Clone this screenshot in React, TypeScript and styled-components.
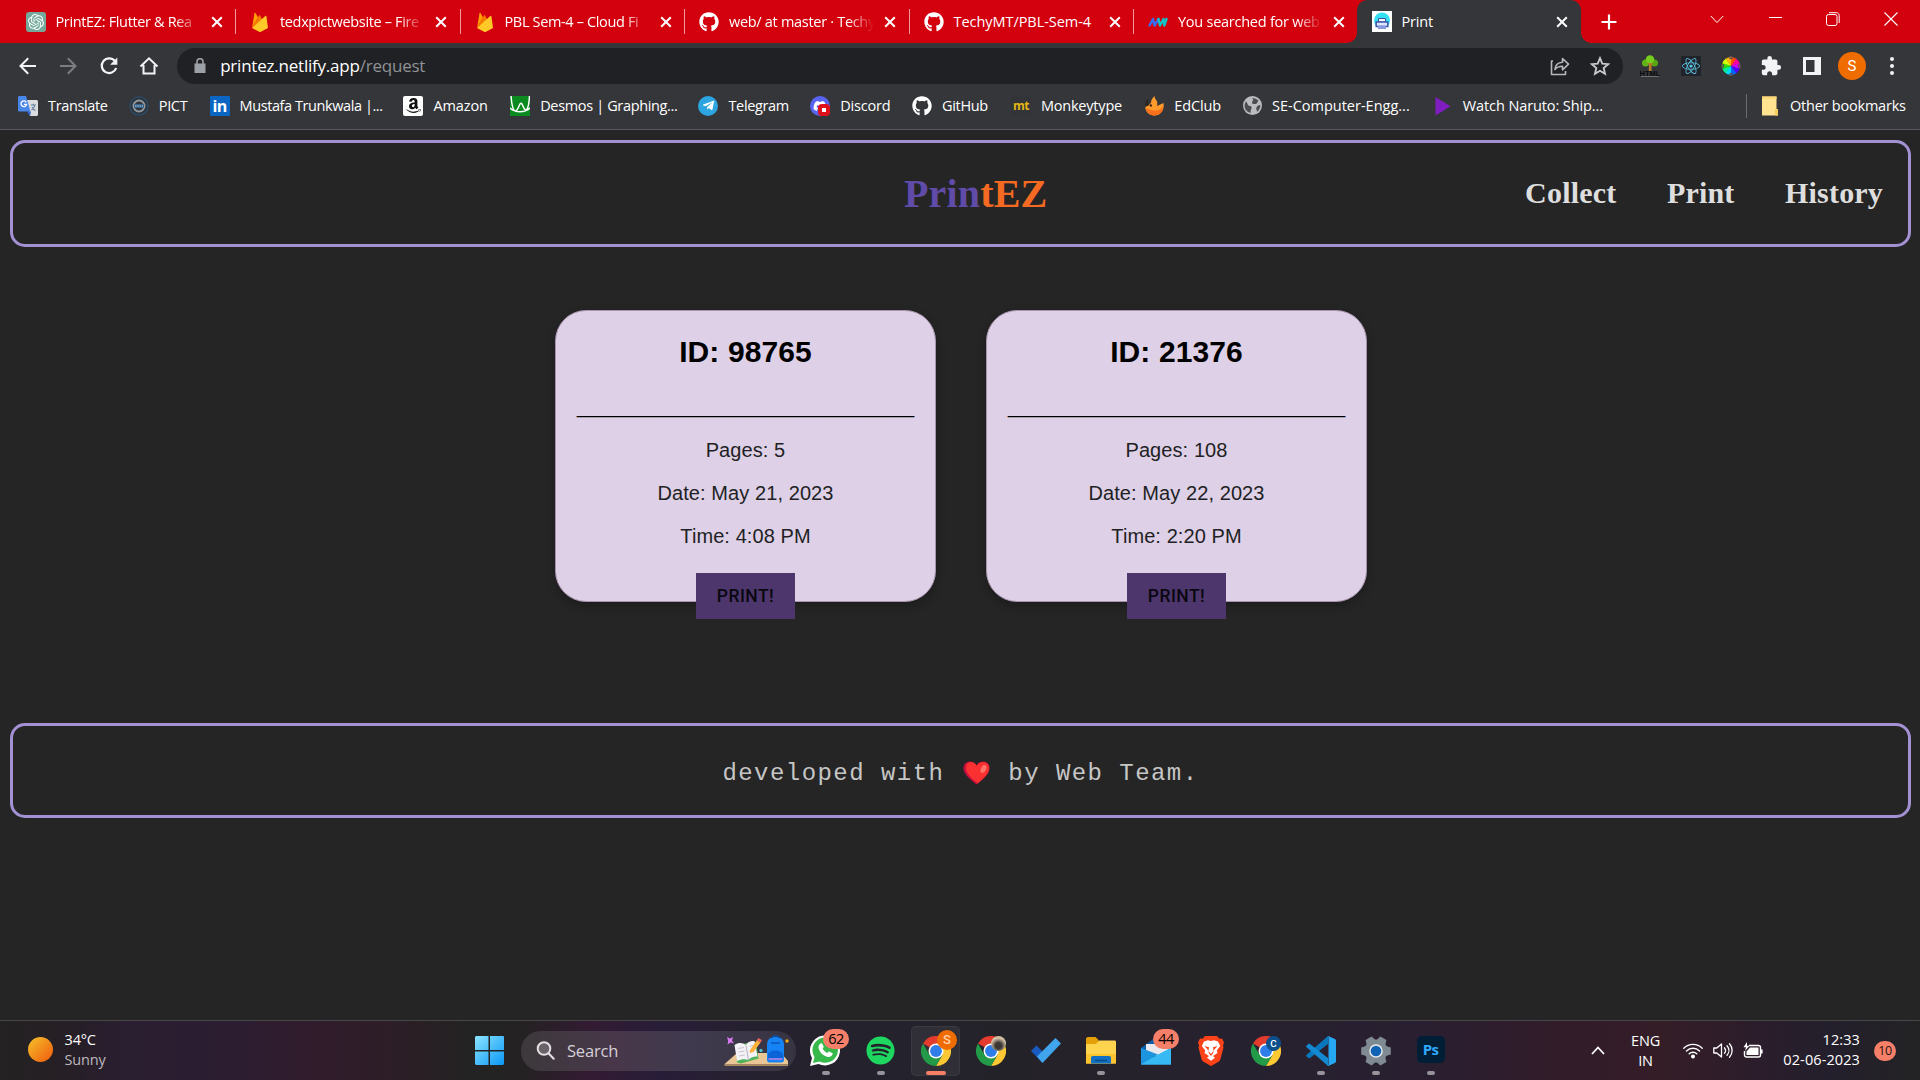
import React from "react";
import styled, { createGlobalStyle, css } from "styled-components";
import { FaGithub, FaSpotify, FaDiscord, FaTelegramPlane, FaAmazon, FaReact } from "react-icons/fa";
import { SiOpenai } from "react-icons/si";
import { MdExtension } from "react-icons/md";

const ui = `"Open Sans", "Noto Sans", sans-serif`;

const GlobalStyle = createGlobalStyle`
  *, *::before, *::after { box-sizing: border-box; }
  html, body { margin: 0; padding: 0; background: #252525; overflow: hidden; }
  svg { display: block; flex: none; }
  h2, p { margin: 0; }
  button { border: 0; margin: 0; padding: 0; background: none; color: inherit; font: inherit; }
`;

const Screen = styled.div`
  width: 1920px;
  height: 1080px;
  display: flex;
  flex-direction: column;
  overflow: hidden;
  background: #252525;
  font-family: ${ui};
`;

/* ---------- tab strip ---------- */

const TabStrip = styled.div`
  flex: none;
  height: 43px;
  padding-left: 11.5px;
  display: flex;
  background: #d3000d;
  color: #fff;
`;

const Tab = styled.div<{ $active?: boolean; $divider?: boolean }>`
  position: relative;
  flex: none;
  width: 224.5px;
  height: 43px;
  padding: 0 13.5px 0 ${(p) => (p.$active ? 15 : 14)}px;
  display: flex;
  align-items: center;
  ${(p) =>
    p.$divider &&
    css`
      &::after {
        content: "";
        position: absolute;
        right: 0;
        top: 9px;
        width: 1px;
        height: 25px;
        background: #f09aa0;
      }
    `}
  ${(p) =>
    p.$active &&
    css`
      margin-left: -2px;
      background: #35363a;
      border-radius: 10px 10px 0 0;
      &::before,
      &::after {
        content: "";
        position: absolute;
        bottom: 0;
        width: 10px;
        height: 10px;
      }
      &::before {
        left: -10px;
        background: radial-gradient(circle at 0 0, transparent 9.5px, #35363a 10px);
      }
      &::after {
        right: -10px;
        background: radial-gradient(circle at 100% 0, transparent 9.5px, #35363a 10px);
      }
    `}
`;

const TabTitle = styled.span<{ $fade?: boolean; $spacing?: number }>`
  flex: 1;
  min-width: 0;
  margin-left: 10px;
  margin-right: 10px;
  white-space: nowrap;
  font-size: 14.5px;
  line-height: 22px;
  letter-spacing: ${(p) => p.$spacing ?? -0.35}px;
  ${(p) => p.$fade && `mask-image: linear-gradient(90deg, #000 calc(100% - 26px), transparent 100%);`}
`;

const WindowControls = styled.div`
  margin-left: auto;
  height: 37px;
  display: flex;
  align-items: center;
`;

const ControlSlot = styled.button`
  width: 58px;
  display: flex;
  justify-content: center;
`;

const NewTab = styled.button`
  margin-left: 20px;
  display: flex;
  align-items: center;
`;

/* ---------- toolbar ---------- */

const Toolbar = styled.div`
  flex: none;
  height: 46px;
  padding-left: 18px;
  display: flex;
  align-items: center;
  background: #35363a;
`;

const NavButtons = styled.div`
  display: flex;
  gap: 20.4px;
`;

const Omnibox = styled.div`
  width: 1446px;
  height: 36px;
  margin-left: 18px;
  padding: 0 12px 0 16px;
  border-radius: 18px;
  background: #202124;
  display: flex;
  align-items: center;
`;

const Url = styled.span`
  margin-left: 13px;
  flex: 1;
  font-size: 17px;
  line-height: 24px;
  letter-spacing: -0.22px;
  color: #fff;
`;

const UrlPath = styled.span`
  color: #8f9296;
`;

const OmniActions = styled.div`
  display: flex;
  gap: 18px;
`;

const Extensions = styled.div`
  margin-left: 7px;
  display: flex;
`;

const ExtensionSlot = styled.div`
  width: 40.35px;
  height: 30px;
  display: flex;
  align-items: center;
  justify-content: center;
`;

const Avatar = styled.div`
  width: 28px;
  height: 28px;
  border-radius: 50%;
  background: #ef6c00;
  color: #fff;
  font: 400 15px/28px Roboto, sans-serif;
  text-align: center;
`;

/* ---------- bookmarks ---------- */

const BookmarkBar = styled.div`
  flex: none;
  height: 41px;
  padding: 0 12px 7px 18px;
  display: flex;
  align-items: center;
  background: #35363a;
  border-bottom: 1px solid #58595c;
  color: #fff;
`;

const Bookmark = styled.div`
  display: flex;
  align-items: center;
  gap: 10px;
  margin-right: 20.8px;
`;

const BookmarkLabel = styled.span<{ $width: number; $spacing?: number }>`
  width: ${(p) => p.$width}px;
  white-space: nowrap;
  font-size: 14.5px;
  line-height: 22px;
  letter-spacing: ${(p) => p.$spacing ?? -0.35}px;
`;

const OtherBookmarks = styled.div`
  margin-left: auto;
  height: 24px;
  padding-left: 14px;
  border-left: 1px solid #6b6c70;
  display: flex;
  align-items: center;
  gap: 11px;
`;

const IconTile = styled.span<{ $bg: string; $radius?: number; $color?: string }>`
  flex: none;
  width: 20px;
  height: 20px;
  border-radius: ${(p) => p.$radius ?? 0}px;
  background: ${(p) => p.$bg};
  color: ${(p) => p.$color ?? "#fff"};
  display: flex;
  align-items: center;
  justify-content: center;
  font: 700 12px/20px ${ui};
  letter-spacing: -0.5px;
`;

const LinkedInTile = styled(IconTile)`
  font-size: 16px;
  line-height: 18px;
`;

const DiscordTile = styled(IconTile)`
  position: relative;
`;

const DiscordAlert = styled.span`
  position: absolute;
  right: 0;
  bottom: 0;
  width: 12px;
  height: 12px;
  border: 4px solid #e0101a;
  border-radius: 4px;
  background: #fff;
`;

/* ---------- web page ---------- */

const Page = styled.main`
  flex: 1;
  min-height: 0;
  padding: 10px 9px 0 10px;
  display: flex;
  flex-direction: column;
  background: #252525;
`;

const Header = styled.header`
  flex: none;
  height: 107px;
  padding: 0 25px 0 891px;
  border: 3px solid #a391d4;
  border-radius: 15px;
  display: flex;
  align-items: center;
  font-family: "Liberation Serif", "Times New Roman", serif;
  font-weight: 700;
`;

const Logo = styled.div`
  font-size: 40px;
  line-height: 46px;
  letter-spacing: 0.15px;
  color: #604ba8;
`;

const LogoAccent = styled.span`
  color: #f46a22;
`;

const Nav = styled.nav`
  margin-left: auto;
  padding-bottom: 2px;
  display: flex;
  gap: 50.6px;
  font-size: 30px;
  line-height: 36px;
  letter-spacing: 0.18px;
  color: #dedede;
`;

const Cards = styled.section`
  flex: none;
  margin-top: 63px;
  height: 413px;
  padding-left: 545px;
  display: flex;
  align-items: flex-start;
  gap: 50px;
`;

const Card = styled.article`
  width: 381px;
  height: 292px;
  padding-top: 23px;
  border: 1px solid #a793ae;
  border-radius: 31px;
  background: #ded0e6;
  box-shadow: 0 4px 10px rgba(0, 0, 0, 0.25);
  display: flex;
  flex-direction: column;
  align-items: center;
  font-family: "Liberation Sans", Arial, sans-serif;
  color: #211f24;
`;

const CardTitle = styled.h2`
  font-size: 30px;
  line-height: 36px;
  font-weight: 700;
  letter-spacing: 0.1px;
  color: #000;
`;

const Rule = styled.p`
  margin-top: 24px;
  font: 22.5px/26px "Liberation Serif", serif;
  color: #000;
`;

const CardLines = styled.div`
  margin-top: 9px;
  text-align: center;
`;

const CardLine = styled.p`
  height: 43px;
  font-size: 20px;
  line-height: 43px;
  letter-spacing: 0.08px;
`;

const PrintButton = styled.button`
  flex: none;
  margin-top: 15px;
  width: 99px;
  height: 46px;
  background: #4c366b;
  color: #0a0710;
  font: 500 17.5px/46px Roboto, sans-serif;
  letter-spacing: 0.45px;
`;

const Footer = styled.footer`
  flex: none;
  height: 95px;
  padding-top: 4px;
  border: 3px solid #a391d4;
  border-radius: 15px;
  display: flex;
  align-items: center;
  justify-content: center;
  gap: 18.5px;
  font: 24px/30px "Liberation Mono", "Courier New", monospace;
  letter-spacing: 1.45px;
  color: #c6c6c6;
`;

const FooterText = styled.span`
  padding-top: 2px;
`;

/* ---------- taskbar ---------- */

const Taskbar = styled.footer`
  flex: none;
  height: 60px;
  border-top: 1px solid #474747;
  display: flex;
  align-items: center;
  color: #fff;
  background: linear-gradient(
    90deg,
    #242222 0, #261f26 70px, #2a1e31 130px, #2c1d31 230px, #311c2c 320px,
    #2c1e26 400px, #232323 470px, #242222 520px, #331b33 590px, #281d38 660px,
    #25212e 760px, #24222d 880px, #242229 1000px, #26222b 1120px, #26212f 1250px,
    #291f30 1420px, #321c2a 1560px, #341d27 1660px, #2b1d2b 1760px, #241f2c 1830px, #232325 1920px
  );
`;

const Weather = styled.div`
  width: 475px;
  padding-left: 27.5px;
  padding-bottom: 2px;
  display: flex;
  align-items: center;
  gap: 12px;
`;

const Sun = styled.span`
  width: 25px;
  height: 25px;
  border-radius: 50%;
  background: linear-gradient(135deg, #f5c22c, #f0590c);
`;

const Stacked = styled.div<{ $align?: string }>`
  font-size: 14.5px;
  line-height: 20px;
  letter-spacing: -0.15px;
  text-align: ${(p) => p.$align ?? "left"};
`;

const Muted = styled.div`
  color: #bdb8be;
`;

const SearchBox = styled.div`
  width: 275px;
  height: 40px;
  margin-left: 16px;
  padding: 0 6px 0 15px;
  border-radius: 20px;
  background: linear-gradient(90deg, #3d393c, #48374a 35%, #403a4e 60%, #373442);
  display: flex;
  align-items: center;
  color: #d6d0d8;
  font-size: 16.5px;
  letter-spacing: -0.2px;
`;

const SearchLabel = styled.span`
  flex: 1;
  margin-left: 12px;
`;

const Apps = styled.div`
  margin-left: 2px;
  display: flex;
`;

const AppSlot = styled.div<{ $active?: boolean }>`
  position: relative;
  width: 49px;
  height: 50px;
  margin: 0 3px;
  border-radius: 5px;
  display: flex;
  align-items: center;
  justify-content: center;
  ${(p) => p.$active && `background: #302f37; box-shadow: inset 0 0 0 1px #3a3940;`}
`;

const Indicator = styled.span<{ $active?: boolean }>`
  position: absolute;
  bottom: 1px;
  left: 50%;
  width: ${(p) => (p.$active ? 20 : 8)}px;
  height: 4px;
  transform: translateX(-50%);
  border-radius: 2px;
  background: ${(p) => (p.$active ? "#f87f66" : "#96939b")};
`;

const CountBadge = styled.span`
  position: absolute;
  top: 3px;
  left: 22px;
  width: 26px;
  height: 20px;
  border-radius: 10px;
  background: #f57f68;
  color: #000;
  font-size: 14.5px;
  line-height: 20px;
  letter-spacing: -0.5px;
  text-align: center;
`;

const ProfileBadge = styled.span<{ $size: number; $bg: string; $top: number; $left: number; $color?: string }>`
  position: absolute;
  top: ${(p) => p.$top}px;
  left: ${(p) => p.$left}px;
  width: ${(p) => p.$size}px;
  height: ${(p) => p.$size}px;
  border-radius: 50%;
  background: ${(p) => p.$bg};
  color: ${(p) => p.$color ?? "#fff"};
  font: 500 ${(p) => p.$size * 0.65}px/${(p) => p.$size}px Roboto, sans-serif;
  text-align: center;
`;

const PhotoshopTile = styled.span`
  width: 28px;
  height: 27px;
  margin-bottom: 2px;
  border-radius: 5px;
  background: #001e36;
  color: #31a8ff;
  font: 700 15px/26px ${ui};
  letter-spacing: -0.8px;
  text-align: center;
`;

const Tray = styled.div`
  margin-left: auto;
  padding-right: 24px;
  display: flex;
  align-items: center;
`;

const TrayLanguage = styled(Stacked)`
  margin-left: 26px;
  width: 29px;
`;

const TrayIcons = styled.div`
  margin: 0 18px 0 23px;
  width: 80px;
  display: flex;
  gap: 10px;
`;

const Clock = styled(Stacked)`
  width: 79px;
  padding-bottom: 2px;
  letter-spacing: 0.1px;
`;

const NoticeBadge = styled.span`
  margin-left: 14px;
  width: 22px;
  height: 20px;
  border-radius: 10px;
  background: #f57f68;
  color: #26140f;
  font-size: 12.5px;
  line-height: 20px;
  letter-spacing: -0.5px;
  text-align: center;
`;

/* ---------- drawings ---------- */

const CloseGlyph = () => (
  <svg width="12" height="12" viewBox="0 0 12 12" stroke="#fff" strokeWidth="2">
    <path d="M1.2 1.2l9.6 9.6M10.8 1.2l-9.6 9.6" />
  </svg>
);

const Firebase = () => (
  <svg width="20" height="20" viewBox="0 0 20 20">
    <path d="M2 16L4.5 1.2c.1-.5.7-.6 1-.2L8 5.6z" fill="#ffa000" />
    <path d="M2 16L9 3.6c.2-.4.8-.4 1 0L12.500 8z" fill="#f57c00" />
    <path d="M2 16L15.300 3.900c.4-.4 1-.2 1.100.3L18 16l-7 3.800c-.6.3-1.300.3-1.900 0z" fill="#ffca28" />
  </svg>
);

const Waves = () => (
  <svg width="20" height="20" viewBox="0 0 20 20" fill="none" strokeWidth="2.4" strokeLinejoin="round" strokeLinecap="round">
    <path d="M1.500 13.500L5 7l1.500 6.500L10.500 7" stroke="#3b6cf0" />
    <path d="M10.500 7l1.500 6.500L15.500 7l.8 6.500L18.500 7" stroke="#12c2c4" />
  </svg>
);

const Printer = () => (
  <svg width="20" height="21" viewBox="0 0 20 21">
    <path d="M0 0h20v21H0z" fill="#fff" />
    <circle cx="10" cy="9.500" r="8" fill="#35dff2" />
    <path d="M6.500 7.500h7v3.500h-7z" fill="#fff" stroke="#3c4fa0" />
    <path d="M4.200 11h11.600v4.500H4.200z" fill="#dfe6ff" stroke="#3f54a8" strokeWidth="1.500" />
    <path d="M6 14.500h8V18H6z" fill="#8c9ae0" />
  </svg>
);

const Translate = () => (
  <svg width="20" height="20" viewBox="0 0 20 20">
    <path d="M8 4h10.500c.8 0 1.500.6 1.500 1.500v13c0 .8-.6 1.500-1.500 1.500H12z" fill="#dadce0" />
    <path d="M1.500 0H8l4.500 15.500h-11C.6 15.500 0 15 0 14V1.500C0 .6.600 0 1.500 0z" fill="#4a86e8" />
    <path d="M9 15.500h4L12 20z" fill="#3367d6" />
    <path d="M8.300 6.300A2.800 2.800 0 1 0 8.600 8.400H6" fill="none" stroke="#fff" strokeWidth="1.300" />
    <path d="M12.800 9h5M15.300 7.800V9M17 9c-.5 2.500-2 4-3.500 5M14 11c.8 1.800 2 3 3.500 3.500" fill="none" stroke="#5f7b9a" strokeWidth="1.100" />
  </svg>
);

const CollegeSeal = () => (
  <svg width="20" height="20" viewBox="0 0 20 20">
    <circle cx="10" cy="10" r="9" fill="#2b333b" stroke="#2b4a66" strokeWidth="1.500" />
    <circle cx="10" cy="10" r="5.500" fill="#30353a" stroke="#94999e" strokeWidth="2" />
    <path d="M5 8h10v4H5z" fill="#35618a" />
    <path d="M6 10h8" stroke="#c5ccd2" strokeDasharray="1.500 .8" />
  </svg>
);

const Desmos = () => (
  <svg width="20" height="20" viewBox="0 0 20 20">
    <path d="M0 0h20v20H0z" fill="#0a8a1f" />
    <path d="M1 0c1.500 18 5 18 8.500 9 1-2.500 2-2.500 3 0 3 8 6 7 7-9M0 12c5 5 15 5 20 0" fill="none" stroke="#fff" strokeWidth="1.500" />
  </svg>
);

const EdClub = () => (
  <svg width="20" height="20" viewBox="0 0 20 20">
    <path d="M7 7c0-3 1-5 4-7-.5 2 0 3 1.500 4.500C13.500 6 13.500 7.500 13 10l6.500-3c1 7-2.500 12.500-9 12.500C4.500 19.500 1 15 1.500 11z" fill="#ff9a2b" />
    <path d="M10 19.500c5.500 0 9.500-4 9.500-9.500-2 3-5 4.500-9 4.500-3 0-6-1-9-2.500 1 4 4 7.500 8.500 7.500z" fill="#f9701c" />
    <path d="M5.500 3C2 3.500 .5 6.500 1.500 10c2 .5 3.500-.5 4-2C4 8 3 6.500 5.500 3z" fill="#2c2520" />
    <circle cx="6.800" cy="9.500" r="1.200" fill="#3c2412" />
  </svg>
);

const Globe = () => (
  <svg width="19" height="19" viewBox="0 0 20 20">
    <circle cx="10" cy="10" r="10" fill="#babcbf" />
    <path d="M3 5.500c3 3 1 4.500 4.500 5 2 .3 2 2 1 3.500-.6 1-.2 2.500-.8 4C3.500 16.500 1.500 13.500 1.600 9.500zM9.500 2c2.500 0 5 1 6.800 3-1.500 1.500-1 3.500-4 3.500-1.500 0-3-.5-2.800-2 .2-1.200 1.500-1.500 1.300-2.500zM18.300 9.500c0 3-1.300 5.500-3.500 7-.3-2-1.300-2.500-.6-4.500.5-1.500 2-2 4.100-2.500z" fill="#4b4c50" />
  </svg>
);

const FolderMark = () => (
  <svg width="18" height="20" viewBox="0 0 18 20">
    <path d="M1 .5h14.500V13L17 14v5.500H1z" fill="#ffe391" />
    <path d="M1 .5h14.500V3H1z" fill="#ffd977" />
    <path d="M14 13h3v6.500h-3z" fill="#f4cd5c" />
  </svg>
);

const HtmlTree = () => (
  <svg width="20" height="22" viewBox="0 0 20 22">
    <path d="M9 8h2.500v8H8.800z" fill="#c8862b" />
    <circle cx="5.500" cy="8" r="3.500" fill="#5fb616" />
    <circle cx="14.500" cy="8" r="3.500" fill="#54a912" />
    <circle cx="10" cy="4.500" r="4.200" fill="#73cf1c" />
    <path d="M10.200 16V8M10.200 11l3-3M10 10L7.500 8" stroke="#b5762a" strokeWidth="1.200" />
    <path d="M1 21.500h18" stroke="#6e6e70" />
    <text x="10" y="20.500" textAnchor="middle" fontFamily="Liberation Sans, sans-serif" fontWeight="700" fontSize="7.500" fill="#0c0c0c">
      HTML
    </text>
  </svg>
);

const wheelColors = ["#ff4d00", "#ff009c", "#d400ff", "#5200ff", "#0068ff", "#00d8ff", "#00f09a", "#2fdf00", "#d8ff00", "#ffb400"];

const ColorWheel = () => (
  <svg width="20" height="20" viewBox="-10 -10 20 20">
    {wheelColors.map((color, i) => {
      const a = ((i * 36 - 90) * Math.PI) / 180;
      const b = (((i + 1) * 36 - 88) * Math.PI) / 180;
      return (
        <path key={color} d={`M0 0L${9 * Math.cos(a)} ${9 * Math.sin(a)}A9 9 0 0 1 ${9 * Math.cos(b)} ${9 * Math.sin(b)}z`} fill={color} />
      );
    })}
    <g fill="none" stroke="#5c4a55" strokeWidth="1.200">
      <circle cy="-8.600" r="1.300" />
      <circle cy="8.600" r="1.300" />
      <circle cx="-8.600" r="1.300" />
      <circle cx="8.600" r="1.300" />
    </g>
  </svg>
);

const Chrome = () => (
  <svg width="30" height="30" viewBox="0 0 48 48">
    <path d="M24 24L3.200 12A24 24 0 0 1 44.800 12z" fill="#e33b2e" />
    <path d="M24 12h20.800A24 24 0 0 1 24 48L34.400 30z" fill="#fcc934" />
    <path d="M13.600 30L3.200 12A24 24 0 0 0 24 48l10.400-18z" fill="#229a48" />
    <circle cx="24" cy="24" r="12" fill="#fff" />
    <circle cx="24" cy="24" r="9.500" fill="#2f7de9" />
  </svg>
);

const WindowsLogo = () => (
  <svg width="30" height="30" viewBox="0 0 30 30">
    <defs>
      <linearGradient id="win" x1="0" y1="0" x2="1" y2="1">
        <stop offset="0" stopColor="#8be4ff" />
        <stop offset="1" stopColor="#0a97f5" />
      </linearGradient>
    </defs>
    <path d="M1 0h12.500v14H0V1zM15 0h13.500l.5 1v13H15zM0 15.500h13.500V29H1l-1-1zM15 15.500h14V28l-1 1H15z" fill="url(#win)" />
  </svg>
);

const SearchArt = () => (
  <svg width="66" height="32" viewBox="0 0 66 32">
    <path d="M0 29.500L13 18h44l7 8v3.500z" fill="#e9c695" />
    <path d="M0 29.500h64v1.500H1z" fill="#b08a5f" />
    <path d="M12 11l11-3 9-1 2.500 16.500L17 28.500l-4-1z" fill="#50b35a" />
    <path d="M10.500 10c4.500-3 8.500-2 11.500 0 1.500-3 5-4.500 8.500-4l3 15.500c-4-.5-7 1-9 3.500-3.500-1.500-7.500-1-11.500 1z" fill="#f4f2f6" />
    <path d="M22 10.500L24.500 25" stroke="#b4b0c0" />
    <path d="M14 13.500l6-1M14.500 17l6-1M15 21l6-1M25.500 11.500l4-1.500M26.500 15l4-1.500" stroke="#c9c5d4" />
    <path d="M26 15l7-10 3.500 2.500-7 9.500-4 1z" fill="#fdb13b" />
    <path d="M33 5l1.500-2 3.500 2.300-1.500 2.200z" fill="#f0645c" />
    <path d="M43 10c0-6 3.500-8 8.500-8s8.500 2 8.500 8v15c0 1.500-1 2.500-2.500 2.500h-12c-1.500 0-2.500-1-2.500-2.500z" fill="#1683f5" />
    <path d="M48 3c0-3 7-3 7 0" stroke="#0d4ea0" fill="none" strokeWidth="1.500" />
    <path d="M47 8h9" stroke="#0b55bd" strokeWidth="1.500" />
    <path d="M44 20c0-6 15-6 15 0v5H44z" fill="#0b63d8" />
    <path d="M44.500 24h14" stroke="#c488f2" strokeWidth="1.500" />
    <path d="M3 2l3 1.500L9 2 8 5.500 10 8.500 6.500 7.500 3.500 9.500 4.200 6z" fill="#d878f2" />
    <circle cx="37" cy="15.500" r="1.700" fill="#4dc3d0" />
    <circle cx="63" cy="6" r="1.700" fill="#f5a80c" />
  </svg>
);

const TodoMark = () => (
  <svg width="30" height="26" viewBox="0 0 30 26">
    <path d="M0 13l5.500-5.500 7.500 7.500-2 9.500z" fill="#185abd" />
    <path d="M6 18.500L24.500 0 30 5.500 11.500 25z" fill="#41a5ee" />
  </svg>
);

const Explorer = () => (
  <svg width="30" height="28" viewBox="0 0 30 28">
    <path d="M0 2c0-1 .7-2 2-2h7.500l3 3v6H0z" fill="#e3a008" />
    <path d="M0 7h10l3-3.500h15.500c1 0 1.500.6 1.500 1.500v20.500c0 .6-.5 1-1 1H0z" fill="#fed44f" />
    <path d="M0 17h30v8.500c0 .6-.5 1-1 1H0z" fill="#fbc42e" />
    <path d="M5 26.500V21c0-1.200.8-2 2-2h16c1.200 0 2 .8 2 2v5.500z" fill="#1070c4" />
    <path d="M9 23.500h12" stroke="#0b4d8c" strokeWidth="1.500" />
  </svg>
);

const MailMark = () => (
  <svg width="30" height="28" viewBox="0 0 30 28">
    <path d="M0 11L15 0l15 11v4H0z" fill="#0a5ea8" />
    <path d="M5 7h22v12H5z" fill="#e9e9ee" />
    <path d="M0 11l13 9 17-9v16.500H0z" fill="#2fb0ee" />
    <path d="M0 11v16.500L17 17.500z" fill="#1c94de" />
    <path d="M30 11v16.500H0L20 16z" fill="#37b9f3" />
  </svg>
);

const BraveMark = () => (
  <svg width="26" height="30" viewBox="0 0 26 30">
    <path d="M7 0h12l2.500 2.700L24 2.500l2 4-1 3 .5 2-3 11.500c-.4 1.200-1 2-2 2.700L14 29.600c-.6.500-1.400.5-2 0L5.500 25.700c-1-.7-1.600-1.500-2-2.700L.5 11.500l.5-2-1-3 2-4 2.500.2z" fill="#fb4218" />
    <path d="M13 5l3-.8 4 1.300 2.200 4.500-3.400 4.500.7 2.500-4.500 3 2 1.800-4 3-4-3 2-1.800-4.500-3 .7-2.500L3.800 10 6 5.500l4-1.300z" fill="#fff" />
    <path d="M6.500 10l4.500 1.200-.6 3.800 2.600 3 2.600-3-.6-3.800 4.500-1.200-3.500 4-1 3.500L13 20l-2-2.500-1-3.500z" fill="#fb4218" />
  </svg>
);

const WhatsAppMark = () => (
  <svg width="31" height="31" viewBox="0 0 31 31">
    <path d="M0 31l2-8A15 15 0 1 1 8.500 29z" fill="#fff" />
    <path d="M3 28l1.500-6A12.700 12.700 0 1 1 9.500 26.500z" fill="#36b84b" />
    <path d="M10.500 8.500c.7-.5 1.500-.4 1.900.4l1.200 2.700c.2.500 0 1-.9 2 1 2.200 2.600 3.600 4.800 4.500 1-1.300 1.400-1.700 2-1.400l2.700 1.300c.6.300.6.800.3 1.600-.8 2-3 2.900-5.500 2.200-4.300-1.300-7-4.300-8.300-8-.6-2 .2-4.200 1.800-5.300z" fill="#fff" />
  </svg>
);

const VsCode = () => (
  <svg width="30" height="30" viewBox="0 0 30 30">
    <path d="M22 0v8L4 22c-.5.400-1.200.400-1.700 0L.6 20.500c-.6-.5-.6-1.300 0-1.800z" fill="#0a77bd" />
    <path d="M22 30v-8L4 8c-.5-.400-1.200-.400-1.700 0L.6 9.500c-.6.500-.6 1.300 0 1.800z" fill="#1489d0" />
    <path d="M21 29.500c.500.500 1 .600 1.800.300l6-2.800c.7-.300 1.200-1 1.200-1.800V4.800c0-.8-.5-1.500-1.200-1.800l-6-2.800C22 0 21.500 0 21 .5c.7-.4 1.500 0 1.500 1v27c0 1-.8 1.400-1.500 1z" fill="#25a7f2" />
  </svg>
);

const Gear = () => (
  <svg width="30" height="30" viewBox="-15 -15 30 30">
    <g fill="#7f8a93">
      <circle r="11.500" />
      {[0, 60, 120, 180, 240, 300].map((deg) => (
        <path key={deg} d="M-5.200-9l1.700-5.800h7L5.200-9z" transform={`rotate(${deg + 30})`} />
      ))}
    </g>
    <circle r="6.800" fill="#e6e9ec" />
    <circle r="5.300" fill="#0f62b4" />
  </svg>
);

const ShareGlyph = () => (
  <svg width="22" height="22" viewBox="0 0 22 22" fill="none" stroke="#b5b7ba" strokeWidth="1.600" strokeLinejoin="round">
    <path d="M4 6H2.500v13.500h14V16" />
    <path d="M6 14.500c.3-4.500 3-7 7.500-7.200V3.500l6 5.700-6 5.600v-3.500c-3.500 0-5.700.8-7.500 3.200z" />
  </svg>
);

const StarGlyph = () => (
  <svg width="22" height="22" viewBox="0 0 24 24" fill="none" stroke="#c8cacd" strokeWidth="2">
    <path d="M12 3.500l2.500 5.900 6.400.6-4.900 4.200 1.500 6.300-5.500-3.300-5.500 3.300L8 14.200 3.100 10l6.400-.6z" />
  </svg>
);

const Heart = () => (
  <svg width="27" height="24" viewBox="0 0 27 24">
    <path d="M13.500 23.500C8 19 .5 13.500.5 7 .5 3 3.300.5 6.800.5c3 0 5.400 1.500 6.700 4C14.800 2 17.200.5 20.200.5c3.500 0 6.300 2.500 6.300 6.500 0 6.500-7.500 12-13 16.500z" fill="#c8103f" />
    <path d="M14.800 22.500C9.500 18 3 13 3 7 3 3.500 5 1 8 1c2.500 0 4.500 1.500 5.800 4C15 2.500 17.200 1 20.200 1c3.300 0 6 2.500 6 6 0 6-6.500 11-11.400 15.500z" fill="#fb3030" />
    <ellipse cx="20.500" cy="8" rx="2.600" ry="4.200" transform="rotate(25 20.500 8)" fill="#fb7468" />
  </svg>
);

/* ---------- content ---------- */

const tabs = [
  { title: "PrintEZ: Flutter & Rea", icon: <IconTile $bg="#74aa9c" $radius={3}><SiOpenai size={16} /></IconTile> },
  { title: "tedxpictwebsite – Fire", icon: <Firebase /> },
  { title: "PBL Sem-4 – Cloud Fi", icon: <Firebase /> },
  { title: "web/ at master · Techy", icon: <FaGithub size={20} />, spacing: -0.3 },
  { title: "TechyMT/PBL-Sem-4", icon: <FaGithub size={20} />, spacing: -0.05, whole: true },
  { title: "You searched for web", icon: <Waves />, spacing: -0.25 },
];

const bookmarks = [
  { label: "Translate", width: 60, icon: <Translate /> },
  { label: "PICT", width: 30, icon: <CollegeSeal /> },
  { label: "Mustafa Trunkwala |...", width: 143, spacing: -0.42, icon: <LinkedInTile $bg="#0a66c2" $radius={1}>in</LinkedInTile> },
  { label: "Amazon", width: 56, spacing: -0.1, icon: <IconTile $bg="#fff" $radius={2} $color="#111"><FaAmazon size={17} /></IconTile> },
  { label: "Desmos | Graphing...", width: 137.5, icon: <Desmos /> },
  { label: "Telegram", width: 61, icon: <IconTile $bg="#2ca5e0" $radius={10}><FaTelegramPlane size={13} /></IconTile> },
  {
    label: "Discord",
    width: 51,
    spacing: -0.2,
    icon: (
      <DiscordTile $bg="#5865f2" $radius={10}>
        <FaDiscord size={14} />
        <DiscordAlert />
      </DiscordTile>
    ),
  },
  { label: "GitHub", width: 48, icon: <FaGithub size={20} /> },
  { label: "Monkeytype", width: 82.5, spacing: -0.2, icon: <IconTile $bg="#323437" $radius={3} $color="#e2b714">mt</IconTile> },
  { label: "EdClub", width: 48, spacing: -0.1, icon: <EdClub /> },
  { label: "SE-Computer-Engg...", width: 141, spacing: 0, icon: <Globe /> },
  {
    label: "Watch Naruto: Ship...",
    width: 141,
    spacing: -0.1,
    icon: (
      <svg width="19" height="20" viewBox="0 0 19 20">
        <path d="M1.500 1l15 9.200-15 9.300z" fill="#7f1dc0" />
      </svg>
    ),
  },
];

const jobs = [
  { id: "98765", pages: 5, date: "May 21, 2023", time: "4:08 PM" },
  { id: "21376", pages: 108, date: "May 22, 2023", time: "2:20 PM" },
];

export default function App() {
  return (
    <Screen>
      <GlobalStyle />
      <TabStrip>
        {tabs.map((tab, i) => (
          <Tab key={tab.title} $divider={i < 5}>
            {tab.icon}
            <TabTitle $fade={!tab.whole} $spacing={tab.spacing}>{tab.title}</TabTitle>
            <CloseGlyph />
          </Tab>
        ))}
        <Tab $active>
          <Printer />
          <TabTitle $spacing={-0.2}>Print</TabTitle>
          <CloseGlyph />
        </Tab>
        <NewTab>
          <svg width="16" height="16" viewBox="0 0 16 16" stroke="#fff" strokeWidth="2.200">
            <path d="M8 .5v15M.5 8h15" />
          </svg>
        </NewTab>
        <WindowControls>
          <ControlSlot>
            <svg width="14" height="14" viewBox="0 0 14 14" fill="none" stroke="#fff">
              <path d="M.8 4l6.200 6.500L13.200 4" />
            </svg>
          </ControlSlot>
          <ControlSlot>
            <svg width="13" height="13" viewBox="0 0 13 13" stroke="#fff">
              <path d="M0 5.500h13" />
            </svg>
          </ControlSlot>
          <ControlSlot>
            <svg width="14" height="14" viewBox="0 0 14 14" fill="none" stroke="#fff">
              <rect x=".5" y="2.500" width="10.500" height="11" rx="2" />
              <path d="M3 .7h7.500c1.500 0 2.700 1.200 2.700 2.700V11" />
            </svg>
          </ControlSlot>
          <ControlSlot>
            <svg width="14" height="14" viewBox="0 0 14 14" stroke="#fff" strokeWidth="1.100">
              <path d="M.5.5l13 13M13.500.5l-13 13" />
            </svg>
          </ControlSlot>
        </WindowControls>
      </TabStrip>

      <Toolbar>
        <NavButtons>
          <svg width="20" height="20" viewBox="0 0 20 20" fill="none" stroke="#f1f3f4" strokeWidth="2">
            <path d="M18 10H3M10.200 2.300L2.500 10l7.700 7.700" />
          </svg>
          <svg width="20" height="20" viewBox="0 0 20 20" fill="none" stroke="#7b7d80" strokeWidth="2">
            <path d="M2 10h15M9.800 2.300l7.700 7.700-7.700 7.700" />
          </svg>
          <svg width="20" height="20" viewBox="0 0 20 20" fill="none" stroke="#f1f3f4" strokeWidth="2.200">
            <path d="M15.900 5A7.400 7.400 0 1 0 17.200 12" />
            <path d="M18.300 1.500v7.200h-7.200z" fill="#f1f3f4" stroke="none" />
          </svg>
          <svg width="20" height="20" viewBox="0 0 20 20" fill="none" stroke="#f1f3f4" strokeWidth="2">
            <path d="M1.500 10.500L10 2.400l8.500 8.100M4.500 9v8.500h11V9" />
          </svg>
        </NavButtons>
        <Omnibox>
          <svg width="14" height="16" viewBox="0 0 14 16">
            <path d="M1.500 5.500h11V15h-11z" fill="#9aa0a6" />
            <path d="M4 6V3.700a3 3 0 0 1 6 0V6" fill="none" stroke="#9aa0a6" strokeWidth="1.600" />
          </svg>
          <Url>
            printez.netlify.app<UrlPath>/request</UrlPath>
          </Url>
          <OmniActions>
            <ShareGlyph />
            <StarGlyph />
          </OmniActions>
        </Omnibox>
        <Extensions>
          <ExtensionSlot><HtmlTree /></ExtensionSlot>
          <ExtensionSlot>
            <IconTile $bg="#20232a" $color="#5fc9ea"><FaReact size={18} /></IconTile>
          </ExtensionSlot>
          <ExtensionSlot><ColorWheel /></ExtensionSlot>
          <ExtensionSlot><MdExtension size={22} color="#f1f3f4" /></ExtensionSlot>
          <ExtensionSlot>
            <svg width="18" height="18" viewBox="0 0 18 18">
              <path d="M0 0h18v18H0zM3 3v12h8.500V3z" fill="#f1f3f4" fillRule="evenodd" />
            </svg>
          </ExtensionSlot>
          <ExtensionSlot><Avatar>S</Avatar></ExtensionSlot>
          <ExtensionSlot>
            <svg width="6" height="18" viewBox="0 0 6 18" fill="#f1f3f4">
              <circle cx="3" cy="2" r="2" />
              <circle cx="3" cy="9" r="2" />
              <circle cx="3" cy="16" r="2" />
            </svg>
          </ExtensionSlot>
        </Extensions>
      </Toolbar>

      <BookmarkBar>
        {bookmarks.map((b) => (
          <Bookmark key={b.label}>
            {b.icon}
            <BookmarkLabel $width={b.width} $spacing={b.spacing}>{b.label}</BookmarkLabel>
          </Bookmark>
        ))}
        <OtherBookmarks>
          <FolderMark />
          <BookmarkLabel $width={118} $spacing={-0.22}>Other bookmarks</BookmarkLabel>
        </OtherBookmarks>
      </BookmarkBar>

      <Page>
        <Header>
          <Logo>
            Prin<LogoAccent>tEZ</LogoAccent>
          </Logo>
          <Nav>
            <span>Collect</span>
            <span>Print</span>
            <span>History</span>
          </Nav>
        </Header>
        <Cards>
          {jobs.map((job) => (
            <Card key={job.id}>
              <CardTitle>ID: {job.id}</CardTitle>
              <Rule>{"_".repeat(30)}</Rule>
              <CardLines>
                <CardLine>Pages: {job.pages}</CardLine>
                <CardLine>Date: {job.date}</CardLine>
                <CardLine>Time: {job.time}</CardLine>
              </CardLines>
              <PrintButton>PRINT!</PrintButton>
            </Card>
          ))}
        </Cards>
        <Footer>
          <FooterText>developed with</FooterText>
          <Heart />
          <FooterText>by Web Team.</FooterText>
        </Footer>
      </Page>

      <Taskbar>
        <Weather>
          <Sun />
          <Stacked>
            <div>34°C</div>
            <Muted>Sunny</Muted>
          </Stacked>
        </Weather>
        <WindowsLogo />
        <SearchBox>
          <svg width="19" height="19" viewBox="0 0 19 19" fill="none" stroke="#e4e0e4" strokeWidth="2">
            <circle cx="8" cy="7.500" r="6.300" fill="#6a6468" />
            <path d="M12.500 12.200l5.200 5.500" strokeLinecap="round" />
          </svg>
          <SearchLabel>Search</SearchLabel>
          <SearchArt />
        </SearchBox>
        <Apps>
          <AppSlot>
            <WhatsAppMark />
            <CountBadge>62</CountBadge>
            <Indicator />
          </AppSlot>
          <AppSlot>
            <FaSpotify size={29} color="#1ed760" />
            <Indicator />
          </AppSlot>
          <AppSlot $active>
            <Chrome />
            <ProfileBadge $size={20} $bg="#ef6c00" $top={4} $left={26} $color="#ffd2ae">S</ProfileBadge>
            <Indicator $active />
          </AppSlot>
          <AppSlot>
            <Chrome />
            <ProfileBadge $size={15} $bg="radial-gradient(circle at 50% 65%, #3b3733 25%, #8d8172 45%, #d3c1a6 62%)" $top={10} $left={25} />
          </AppSlot>
          <AppSlot><TodoMark /></AppSlot>
          <AppSlot>
            <Explorer />
            <Indicator />
          </AppSlot>
          <AppSlot>
            <MailMark />
            <CountBadge>44</CountBadge>
          </AppSlot>
          <AppSlot><BraveMark /></AppSlot>
          <AppSlot>
            <Chrome />
            <ProfileBadge $size={15} $bg="#0b4f8c" $top={10} $left={25}>C</ProfileBadge>
          </AppSlot>
          <AppSlot>
            <VsCode />
            <Indicator />
          </AppSlot>
          <AppSlot>
            <Gear />
            <Indicator />
          </AppSlot>
          <AppSlot>
            <PhotoshopTile>Ps</PhotoshopTile>
            <Indicator />
          </AppSlot>
        </Apps>
        <Tray>
          <svg width="14" height="9" viewBox="0 0 14 9" fill="none" stroke="#fff" strokeWidth="1.800">
            <path d="M1 8l6-6.500L13 8" />
          </svg>
          <TrayLanguage $align="center">
            <div>ENG</div>
            <div>IN</div>
          </TrayLanguage>
          <TrayIcons>
            <svg width="20" height="17" viewBox="0 0 20 17" fill="none" stroke="#fff" strokeWidth="1.400" strokeLinecap="round">
              <path d="M.8 6.200a13 13 0 0 1 18.400 0M3.500 9a9.200 9.200 0 0 1 13 0M6.200 11.800a5.400 5.400 0 0 1 7.600 0" />
              <circle cx="10" cy="14.500" r="1.300" fill="#fff" />
            </svg>
            <svg width="20" height="17" viewBox="0 0 20 17" fill="none" stroke="#fff" strokeWidth="1.300" strokeLinecap="round" strokeLinejoin="round">
              <path d="M.8 6v5h3l4.700 4V2L3.800 6zM11.500 5.800c1.300 1.600 1.300 3.800 0 5.400M14 3.700c2.500 2.800 2.500 6.800 0 9.600M16.500 1.700c3.500 3.900 3.500 9.700 0 13.600" />
            </svg>
            <svg width="20" height="17" viewBox="0 0 20 17" fill="none" stroke="#fff" strokeWidth="1.400">
              <path d="M6 3.500h9.500c1.200 0 2 .8 2 2v7.500c0 1.200-.8 2-2 2H3.500c-1.200 0-2-.8-2-2V9" />
              <path d="M7 5.500h8.500V13h-12V9.500z" fill="#fff" stroke="none" />
              <path d="M18 7.500h1.600v4H18z" fill="#fff" stroke="none" />
              <path d="M4 0L.5 5.200H3L2 9l4.500-5.300H4z" fill="#fff" stroke="none" />
            </svg>
          </TrayIcons>
          <Clock $align="right">
            <div>12:33</div>
            <div>02-06-2023</div>
          </Clock>
          <NoticeBadge>10</NoticeBadge>
        </Tray>
      </Taskbar>
    </Screen>
  );
}
